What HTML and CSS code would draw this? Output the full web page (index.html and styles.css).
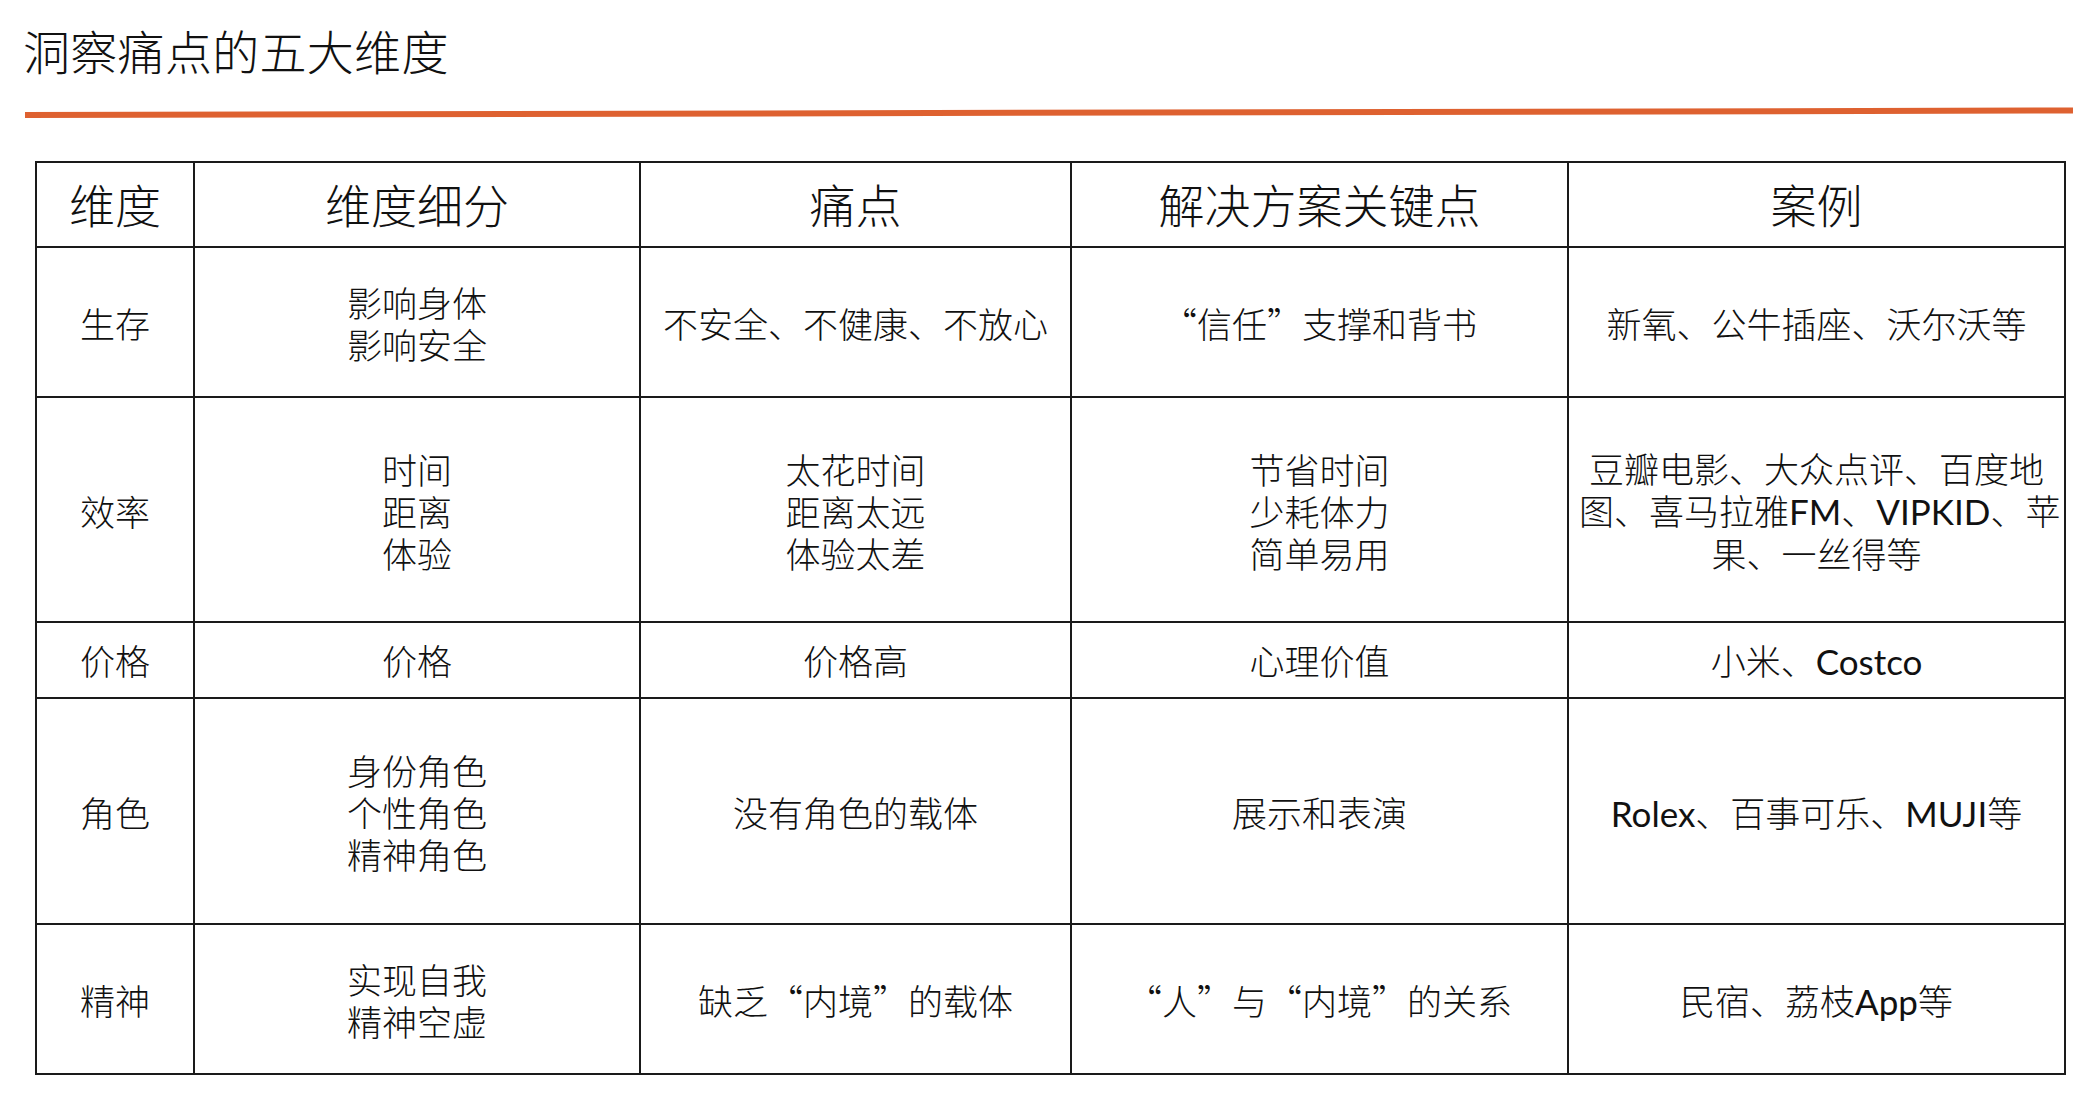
FILE: index.html
```html
<!DOCTYPE html>
<html lang="zh-CN">
<head>
<meta charset="utf-8">
<title>洞察痛点的五大维度</title>
<link rel="stylesheet" href="styles.css">
</head>
<body>
<h1 class="title">洞察痛点的五大维度</h1>
<div class="rule"></div>
<table class="grid">
  <colgroup>
    <col class="c1"><col class="c2"><col class="c3"><col class="c4"><col class="c5">
  </colgroup>
  <thead>
    <tr class="r-head">
      <th>维度</th><th>维度细分</th><th>痛点</th><th>解决方案关键点</th><th>案例</th>
    </tr>
  </thead>
  <tbody>
    <tr class="r1">
      <td>生存</td>
      <td>影响身体<br>影响安全</td>
      <td>不安全、不健康、不放心</td>
      <td>“信任”支撑和背书</td>
      <td>新氧、公牛插座、沃尔沃等</td>
    </tr>
    <tr class="r2">
      <td>效率</td>
      <td>时间<br>距离<br>体验</td>
      <td>太花时间<br>距离太远<br>体验太差</td>
      <td>节省时间<br>少耗体力<br>简单易用</td>
      <td>豆瓣电影、大众点评、百度地<br>图、喜马拉雅<span class="en">FM</span>、<span class="en">VIPKID</span>、苹<br>果、一丝得等</td>
    </tr>
    <tr class="r3">
      <td>价格</td>
      <td>价格</td>
      <td>价格高</td>
      <td>心理价值</td>
      <td>小米、<span class="en">Costco</span></td>
    </tr>
    <tr class="r4">
      <td>角色</td>
      <td>身份角色<br>个性角色<br>精神角色</td>
      <td>没有角色的载体</td>
      <td>展示和表演</td>
      <td><span class="en">Rolex</span>、百事可乐、<span class="en">MUJI</span>等</td>
    </tr>
    <tr class="r5">
      <td>精神</td>
      <td>实现自我<br>精神空虚</td>
      <td>缺乏“内境”的载体</td>
      <td>“人”与“内境”的关系</td>
      <td>民宿、荔枝<span class="en">App</span>等</td>
    </tr>
  </tbody>
</table>
</body>
</html>
```
FILE: styles.css
```css
html, body {
  margin: 0;
  padding: 0;
  background: #ffffff;
}
body {
  width: 2084px;
  height: 1100px;
  overflow: hidden;
  font-family: "Noto Sans CJK SC", "Noto Sans", sans-serif;
  color: #111111;
}
.title {
  margin: 22px 0 0 23px;
  font-size: 47px;
  line-height: 56px;
  font-weight: 300;
  letter-spacing: 0.3px;
  color: #111111;
}
.rule {
  margin: 34px 0 0 25px;
  width: 2048px;
  height: 6px;
  background: #de6130;
  transform: rotate(-0.125deg);
  transform-origin: 0 50%;
}
.grid {
  margin: 43px 0 0 35px;
  width: 2029px;
  border-collapse: collapse;
  table-layout: fixed;
}
.c1 { width: 158px; }
.c2 { width: 446px; }
.c3 { width: 431px; }
.c4 { width: 497px; }
.c5 { width: 497px; }
.grid th,
.grid td {
  border: 2px solid #1a1a1a;
  text-align: center;
  vertical-align: middle;
  padding: 0 10px;
  white-space: nowrap;
  font-weight: 300;
  color: #111111;
}
.grid th {
  font-size: 46px;
  line-height: 56px;
  padding-bottom: 3px;
}
.grid td {
  font-size: 35px;
  line-height: 42px;
  padding-top: 2px;
}
.r-head { height: 85px; }
.r1 { height: 150px; }
.r2 { height: 225px; }
.r3 { height: 76px; }
.r4 { height: 226px; }
.r5 { height: 150px; }
.r3 td { padding-top: 0; }
.en {
  font-family: "Lato", "Noto Sans", sans-serif;
  font-weight: 400;
}
```
